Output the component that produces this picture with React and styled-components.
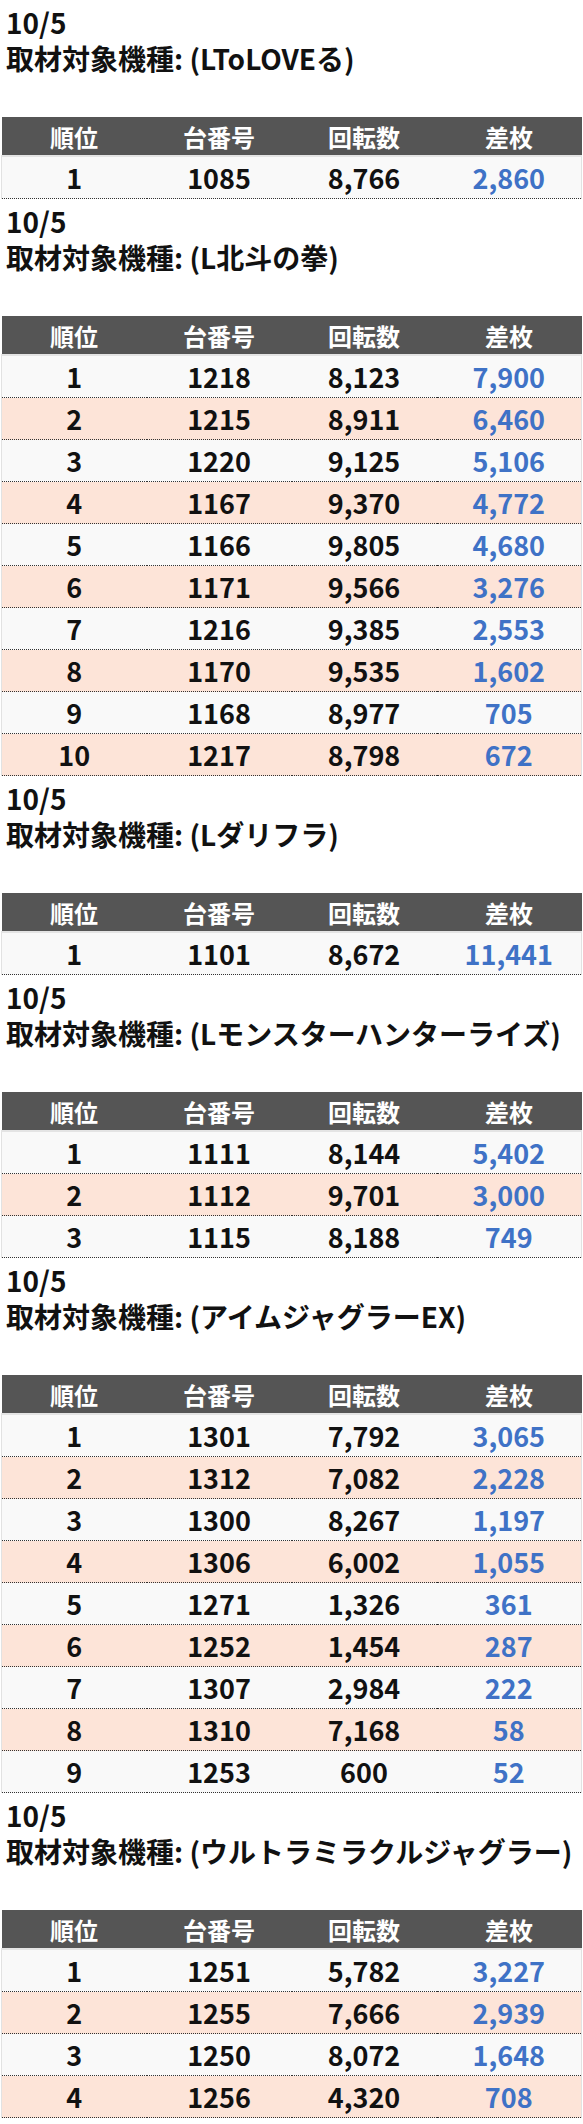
import styled, { createGlobalStyle } from "styled-components";

const GlobalStyle = createGlobalStyle`
	body {
		margin: 0;
		background: #fff;
		font-family: "Noto Sans CJK JP", "Noto Sans", sans-serif;
	}
`;

const blocks = [
	{
		date: "10/5",
		machine: "LToLOVEる",
		rows: [[1, 1085, "8,766", "2,860"]],
	},
	{
		date: "10/5",
		machine: "L北斗の拳",
		rows: [
			[1, 1218, "8,123", "7,900"],
			[2, 1215, "8,911", "6,460"],
			[3, 1220, "9,125", "5,106"],
			[4, 1167, "9,370", "4,772"],
			[5, 1166, "9,805", "4,680"],
			[6, 1171, "9,566", "3,276"],
			[7, 1216, "9,385", "2,553"],
			[8, 1170, "9,535", "1,602"],
			[9, 1168, "8,977", "705"],
			[10, 1217, "8,798", "672"],
		],
	},
	{
		date: "10/5",
		machine: "Lダリフラ",
		rows: [[1, 1101, "8,672", "11,441"]],
	},
	{
		date: "10/5",
		machine: "Lモンスターハンターライズ",
		rows: [
			[1, 1111, "8,144", "5,402"],
			[2, 1112, "9,701", "3,000"],
			[3, 1115, "8,188", "749"],
		],
	},
	{
		date: "10/5",
		machine: "アイムジャグラーEX",
		rows: [
			[1, 1301, "7,792", "3,065"],
			[2, 1312, "7,082", "2,228"],
			[3, 1300, "8,267", "1,197"],
			[4, 1306, "6,002", "1,055"],
			[5, 1271, "1,326", "361"],
			[6, 1252, "1,454", "287"],
			[7, 1307, "2,984", "222"],
			[8, 1310, "7,168", "58"],
			[9, 1253, "600", "52"],
		],
	},
	{
		date: "10/5",
		machine: "ウルトラミラクルジャグラー",
		rows: [
			[1, 1251, "5,782", "3,227"],
			[2, 1255, "7,666", "2,939"],
			[3, 1250, "8,072", "1,648"],
			[4, 1256, "4,320", "708"],
		],
	},
];

const Title = styled.div`
	padding: 4px 6px 0;
	margin-bottom: 41px;
	font-size: 28px;
	font-weight: 700;
	line-height: 36px;
	color: #111;
`;

const Table = styled.table`
	margin-left: 1px;
	width: 581px;
	border-collapse: collapse;
	table-layout: fixed;
`;

const Th = styled.th`
	height: 38px;
	padding: 0;
	background: #555;
	color: #fff;
	font-size: 24px;
	font-weight: 700;
	text-align: center;
	border-bottom: 2px solid #e4e4e4;
`;

const Row = styled.tr`
	background: ${(p) => (p.$even ? "#fde4d8" : "#f9f9f9")};
	border-bottom: 1px dotted #333;
	border-left: 1px solid #e2e2e2;
	border-right: 1px solid #e2e2e2;
`;

const Td = styled.td`
	height: 41px;
	padding: 0;
	text-align: center;
	font-size: 27px;
	font-weight: 700;
	color: ${(p) => (p.$diff ? "#3f72c6" : "#111")};
`;

function Block({ date, machine, rows }) {
	return (
		<section>
			<Title>
				{date}
				<br />
				取材対象機種: ({machine})
			</Title>
			<Table>
				<thead>
					<tr>
						<Th>順位</Th>
						<Th>台番号</Th>
						<Th>回転数</Th>
						<Th>差枚</Th>
					</tr>
				</thead>
				<tbody>
					{rows.map((r, i) => (
						<Row key={i} $even={i % 2 === 1}>
							<Td>{r[0]}</Td>
							<Td>{r[1]}</Td>
							<Td>{r[2]}</Td>
							<Td $diff>{r[3]}</Td>
						</Row>
					))}
				</tbody>
			</Table>
		</section>
	);
}

export default function App() {
	return (
		<>
			<GlobalStyle />
			{blocks.map((b, i) => (
				<Block key={i} {...b} />
			))}
		</>
	);
}
